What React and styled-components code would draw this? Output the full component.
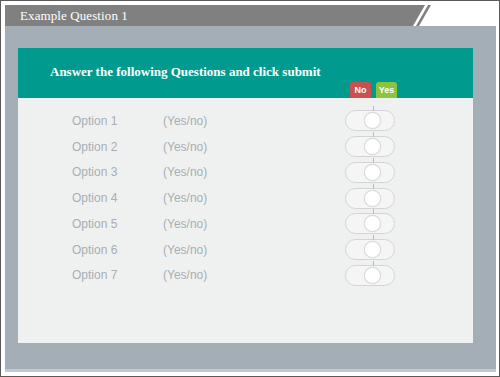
import React from 'react';
import styled, { createGlobalStyle } from 'styled-components';

const GlobalStyle = createGlobalStyle`
  html, body {
    margin: 0;
    padding: 0;
    background: #ffffff;
  }
  * {
    box-sizing: border-box;
  }
`;

const Frame = styled.div`
  width: 500px;
  height: 377px;
  border: 1px solid #5a5a5a;
  padding: 4px 3px 4px 4px;
  background: #ffffff;
`;

const Slide = styled.div`
  height: 100%;
  display: flex;
  flex-direction: column;
  background: #a3aeb6;
  border-bottom: 3px solid #c3cacf;
`;

const Header = styled.div`
  height: 21px;
  display: flex;
  background: #ffffff;
  position: relative;
`;

const HeaderBar = styled.div`
  width: 430px;
  height: 100%;
  background: #808080;
  clip-path: polygon(0 0, 420px 0, 408px 100%, 0 100%);
  display: flex;
  align-items: center;
  padding-left: 15px;
`;

const HeaderStripe = styled.div`
  position: absolute;
  top: 0;
  left: 410px;
  width: 18px;
  height: 21px;
  background: #808080;
  clip-path: polygon(13px 0, 16px 0, 4px 100%, 1px 100%);
`;

const HeaderTitle = styled.span`
  font-family: "Liberation Serif", "Times New Roman", serif;
  font-size: 13px;
  color: #ffffff;
  letter-spacing: 0.1px;
`;

const Body = styled.div`
  flex: 1;
  padding: 22px 23px 0 13px;
`;

const Card = styled.div`
  display: flex;
  flex-direction: column;
`;

const CardHead = styled.div`
  height: 50px;
  background: #009b8e;
  display: flex;
  flex-direction: column;
`;

const CardTitle = styled.div`
  margin-top: 16px;
  padding-left: 32px;
  font-family: "Liberation Serif", "Times New Roman", serif;
  font-weight: bold;
  font-size: 13px;
  line-height: 16px;
  color: #ffffff;
`;

const Tabs = styled.div`
  margin-top: auto;
  margin-left: 332px;
  display: flex;
  gap: 5px;
`;

const Tab = styled.div`
  width: 21px;
  height: 16px;
  border-radius: 3px 3px 0 0;
  background: ${(p) => p.$color};
  color: #ffffff;
  font-family: "Liberation Sans", Arial, sans-serif;
  font-weight: bold;
  font-size: 9px;
  display: flex;
  align-items: center;
  justify-content: center;
`;

const Panel = styled.div`
  height: 245px;
  background: #eff1f1;
  padding-top: 10px;
  display: flex;
  flex-direction: column;
`;

const Row = styled.div`
  height: 25.75px;
  display: grid;
  grid-template-columns: 54px 91px 182px 50px;
  align-items: center;
  font-family: "Liberation Sans", Arial, sans-serif;
  font-size: 12px;
  color: #a8aeb3;
`;

const Cell = styled.span`
  grid-column: ${(p) => p.$col};
`;

const Toggle = styled.div`
  grid-column: 4;
  width: 50px;
  height: 21px;
  border-radius: 11px;
  border: 1.5px solid #d2d4d5;
  background: #f5f5f5;
  display: flex;
  align-items: center;
  justify-content: center;
  position: relative;

  &::before {
    content: '';
    position: absolute;
    left: 27px;
    top: -5px;
    width: 1px;
    height: 5px;
    background: #b9bcbe;
  }
`;

const Knob = styled.div`
  width: 17px;
  height: 17px;
  border-radius: 50%;
  background: #ffffff;
  border: 1px solid #d8dadb;
  box-shadow: 0 0 1px rgba(0, 0, 0, 0.15);
  margin-left: 4px;
`;

const options = [1, 2, 3, 4, 5, 6, 7];

export default function App() {
  return (
    <>
      <GlobalStyle />
      <Frame>
        <Slide>
          <Header>
            <HeaderBar>
              <HeaderTitle>Example Question 1</HeaderTitle>
            </HeaderBar>
            <HeaderStripe />
          </Header>
          <Body>
            <Card>
              <CardHead>
                <CardTitle>Answer the following Questions and click submit</CardTitle>
                <Tabs>
                  <Tab $color="#c9514f">No</Tab>
                  <Tab $color="#8cc43f">Yes</Tab>
                </Tabs>
              </CardHead>
              <Panel>
                {options.map((n) => (
                  <Row key={n}>
                    <Cell $col={2}>Option {n}</Cell>
                    <Cell $col={3}>(Yes/no)</Cell>
                    <Toggle>
                      <Knob />
                    </Toggle>
                  </Row>
                ))}
              </Panel>
            </Card>
          </Body>
        </Slide>
      </Frame>
    </>
  );
}
